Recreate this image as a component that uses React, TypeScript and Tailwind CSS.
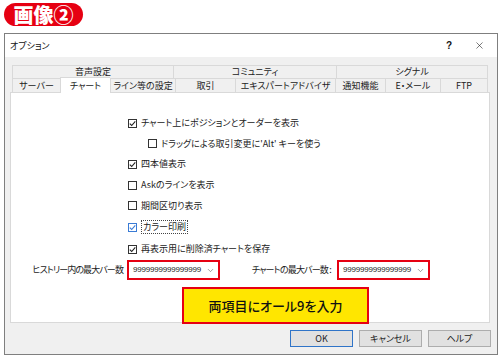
import { ChevronDown, X } from 'lucide-react';

const TOP_TABS = [
  { label: '音声設定', w: 'w-[161px]' },
  { label: 'コミュニティ', w: 'w-[163px]' },
  { label: 'シグナル', w: 'w-[152px]' },
];

const TABS = [
  { label: 'サーバー', w: 'w-[48px]' },
  { label: 'チャート', w: 'w-[50px]', active: true },
  { label: 'ライン等の設定', w: 'w-[65px]' },
  { label: '取引', w: 'w-[60px]' },
  { label: 'エキスパートアドバイザ', w: 'w-[100px]' },
  { label: '通知機能', w: 'w-[50px]' },
  { label: 'E・メール', w: 'w-[55px]' },
  { label: 'FTP', w: 'w-[48px]' },
];

const OPTIONS = [
  { label: 'チャート上にポジションとオーダーを表示', checked: true },
  { label: "ドラッグによる取引変更に'Alt' キーを使う", checked: false, indent: true },
  { label: '四本値表示', checked: true },
  { label: 'Askのラインを表示', checked: false },
  { label: '期間区切り表示', checked: false },
  { label: 'カラー印刷', checked: true, focused: true },
  { label: '再表示用に削除済チャートを保存', checked: true },
];

function Checkbox({ checked, focused }: { checked: boolean; focused?: boolean }) {
  return (
    <span
      className={`flex h-[9px] w-[9px] shrink-0 items-center justify-center border bg-white ${
        focused ? 'border-[#3a7bd5] text-[#3a7bd5]' : 'border-[#333] text-[#222]'
      }`}
    >
      {checked && (
        <svg width="7" height="7" viewBox="0 0 7 7" fill="none">
          <polyline points="0.8,3.6 2.7,5.5 6.3,1.3" stroke="currentColor" strokeWidth="1.1" />
        </svg>
      )}
    </span>
  );
}

function BarsSelect() {
  return (
    <div className="flex h-[20px] w-[93px] shrink-0 items-center border-2 border-[#e60012] bg-white pl-[4px] pr-[3px]">
      <span className="flex-1 font-['Liberation_Sans',sans-serif] text-[8px] tracking-[-0.2px] text-[#222]">
        9999999999999999
      </span>
      <ChevronDown size={9} strokeWidth={1.5} className="text-[#555]" />
    </div>
  );
}

export default function App() {
  return (
    <div className="h-[358px] w-[500px] overflow-hidden bg-white font-['Noto_Sans_CJK_JP',sans-serif] [font-feature-settings:'palt']">
      {/* label pill */}
      <div className="ml-[4px] mt-[3px] flex h-[23px] w-[79px] items-center justify-center rounded-full bg-[#e60012] text-[20px] font-black leading-none text-white">
        画像②
      </div>

      {/* dialog */}
      <div className="ml-[4px] mt-[7px] flex h-[322px] w-[494px] flex-col border border-[#7f7f7f] bg-[#f0f0f0]">
        <div className="flex h-[23px] shrink-0 items-center bg-white pl-[5px] pr-[12px] text-[9px] text-[#111]">
          <span className="flex-1">オプション</span>
          <span className="mr-[22px] font-['Liberation_Sans',sans-serif] text-[10px] font-bold">?</span>
          <X size={11} strokeWidth={1.2} />
        </div>

        <div className="flex flex-1 flex-col px-[5px] pt-[8px]">
          {/* tabs */}
          <div className="ml-[2px] flex h-[13px] shrink-0 whitespace-nowrap text-[9px] text-[#222]">
            {TOP_TABS.map((t) => (
              <div
                key={t.label}
                className={`${t.w} flex items-center justify-center border border-b-0 border-r-0 border-[#d9d9d9] bg-[#f0f0f0] last:border-r`}
              >
                {t.label}
              </div>
            ))}
          </div>
          <div className="ml-[2px] flex h-[14px] shrink-0 items-end whitespace-nowrap text-[9px] text-[#222]">
            {TABS.map((t) => (
              <div
                key={t.label}
                className={`${t.w} flex items-center justify-center border border-b-0 border-r-0 border-[#d9d9d9] last:border-r ${
                  t.active ? 'relative z-10 -mb-px h-[16px] bg-white' : 'h-[14px] bg-[#f0f0f0]'
                }`}
              >
                {t.label}
              </div>
            ))}
          </div>

          {/* panel */}
          <div className="flex h-[231px] w-[480px] shrink-0 flex-col border border-[#d9d9d9] bg-white">
            <div className="ml-[117px] mt-[24px] flex flex-col gap-[8.7px] whitespace-nowrap text-[9px] leading-[12px] text-[#222]">
              {OPTIONS.map((o) => (
                <div key={o.label} className={`flex items-center gap-[4px] ${o.indent ? 'ml-[20px]' : ''}`}>
                  <Checkbox checked={o.checked} focused={o.focused} />
                  <span className={o.focused ? 'border border-dotted border-[#444] px-px' : ''}>{o.label}</span>
                </div>
              ))}
            </div>

            <div className="mt-[5px] flex h-[20px] shrink-0 items-center whitespace-nowrap text-[9px] text-[#222]">
              <span className="ml-[5px] w-[107px] text-right tracking-[-0.9px]">ヒストリー内の最大バー数</span>
              <div className="ml-[4px]">
                <BarsSelect />
              </div>
              <span className="ml-[5px] w-[106px] text-right tracking-[-0.8px]">チャートの最大バー数 :</span>
              <div className="ml-[6px]">
                <BarsSelect />
              </div>
            </div>

            <div className="ml-[171px] mt-[7px] flex h-[37px] w-[187px] shrink-0 items-center justify-center border-2 border-[#e60012] bg-[#ffe600] text-[13px] font-medium text-[#111]">
              両項目にオール9を入力
            </div>
          </div>

          {/* buttons */}
          <div className="mt-[7px] flex justify-end gap-[6px] pr-[1px] text-[9px] text-[#222]">
            <button className="flex h-[17px] w-[63px] items-center justify-center border border-[#2f74c8] bg-[#e1e1e1]">
              OK
            </button>
            <button className="flex h-[17px] w-[63px] items-center justify-center border border-[#adadad] bg-[#e1e1e1]">
              キャンセル
            </button>
            <button className="flex h-[17px] w-[63px] items-center justify-center border border-[#adadad] bg-[#e1e1e1]">
              ヘルプ
            </button>
          </div>
        </div>
      </div>
    </div>
  );
}
